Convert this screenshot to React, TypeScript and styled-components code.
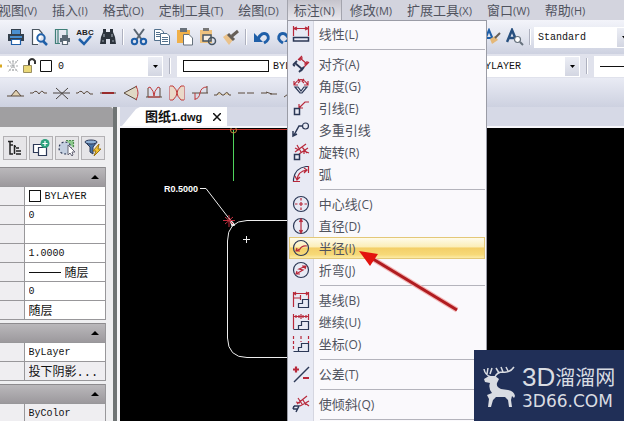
import React from "react";
import styled, { createGlobalStyle, css } from "styled-components";

const NAVY = "#2c3856";
const RED = "#b8283a";
const UI = '"Open Sans", "Noto Sans CJK SC", sans-serif';
const MONO = '"Liberation Mono", "Noto Sans CJK SC", monospace';

const Global = createGlobalStyle`
  * { box-sizing: border-box; }
  body { margin: 0; overflow: hidden; background: #000; }
  button, input, select { font: inherit; color: inherit; margin: 0; border: 0; padding: 0; border-radius: 0; }
`;

const Page = styled.div`
  position: relative;
  display: flex;
  flex-direction: column;
  height: 100vh;
  overflow: hidden;
  background: #cdd1e0;
  font-family: ${UI};
  font-size: 13px;
  color: #50535e;
`;

const MenuBar = styled.nav`
  display: flex;
  gap: 1px;
  height: 20px;
  margin-left: -9px;
  background: #d3d4de;
`;

const MenuSlot = styled.div`
  position: relative;
`;

const MenuButton = styled.button<{ $open?: boolean }>`
  height: 20px;
  padding: 0 7px;
  line-height: 20px;
  white-space: nowrap;
  background: none;
  ${(p) =>
    p.$open &&
    css`
      background: linear-gradient(#c5c4cc, #e9e8ee);
      box-shadow: inset 1px 0 #a3a4ad, inset -1px 0 #a3a4ad;
    `}
`;

const Key = styled.span<{ $large?: boolean }>`
  font-size: ${(p) => (p.$large ? 12 : 11)}px;
`;

const Dropdown = styled.div`
  position: absolute;
  z-index: 3;
  top: 20px;
  left: 0;
  width: 200px;
  padding: 2px 1px 8px;
  border: 1px solid #9a9ca6;
  background: linear-gradient(90deg, #e8eaf4 25px, #d5d6e0 25px, #d5d6e0 26px, #faf9fc 26px);
`;

const Command = styled.button<{ $active?: boolean }>`
  display: grid;
  grid-template-columns: 24px 1fr;
  column-gap: 6px;
  align-items: center;
  width: 100%;
  height: 22px;
  line-height: 20px;
  text-align: left;
  background: none;
  ${(p) =>
    p.$active &&
    css`
      background: linear-gradient(#fffdf0, #fbeeb8 45%, #f3cf68 50%, #f7d978 80%, #fdf0b4);
      box-shadow: inset 0 0 0 1px #e3c878;
    `}
`;

const CommandIcon = styled.span`
  display: grid;
  place-items: center;
`;

const Divider = styled.hr`
  height: 1px;
  margin: 4px 0 3px 31px;
  border: 0;
  background: #b4b4bc;
`;

const Toolbar = styled.div`
  display: flex;
  align-items: center;
  height: 34px;
  padding-left: 4px;
  background: linear-gradient(#f3f4fa, #e2e5ef 50%, #cdd1e0);
`;

const PropertyBar = styled.div`
  display: flex;
  align-items: center;
  height: 24px;
  background: #e0e2ec;
`;

const ShapeBar = styled.div`
  display: flex;
  align-items: center;
  height: 29px;
  padding-left: 4px;
  background: linear-gradient(#e9ebf4, #cdd1e0);
`;

const Tool = styled.button`
  display: grid;
  flex: none;
  place-items: center;
  width: 23px;
  height: 24px;
  background: none;
`;

const Grip = styled.span<{ $loose?: boolean }>`
  flex: none;
  width: 2px;
  height: 16px;
  margin: 0 ${(p) => (p.$loose ? 6 : 3)}px;
  background: linear-gradient(90deg, #aeb1bf 1px, #fff 1px);
`;

const Spacer = styled.span`
  flex: 1;
`;

const Combo = styled.label<{ $width: number; $bleed?: boolean }>`
  display: flex;
  flex: none;
  align-items: center;
  width: ${(p) => p.$width}px;
  height: 21px;
  margin-right: ${(p) => (p.$bleed ? -8 : 0)}px;
  background: #fff;
  color: #111;
  font-family: ${MONO};
  font-size: 10px;
`;

const ComboText = styled.select`
  flex: 1;
  min-width: 0;
  height: 21px;
  appearance: none;
  padding-left: 4px;
  background: none;
`;

const ComboArrow = styled.span`
  display: grid;
  flex: none;
  place-items: center;
  width: 14px;
  height: 19px;
  margin-right: 1px;
  background: linear-gradient(#eceef5, #d3d6e2);
`;

const Swatch = styled.span<{ $wide?: boolean }>`
  flex: none;
  width: ${(p) => (p.$wide ? 86 : 12)}px;
  height: 12px;
  margin-left: ${(p) => (p.$wide ? 6 : 0)}px;
  border: 1px solid #111;
  background: #fff;
`;

const Body = styled.main`
  display: grid;
  grid-template-columns: 120px 1fr;
  flex: 1;
  min-height: 0;
`;

const Sidebar = styled.aside`
  min-height: 0;
  overflow: hidden;
  border-right: 3px solid #f4f4f6;
  background: linear-gradient(270deg, #6f7474 4px, #efeff1 4px);
`;

const SideTitle = styled.div`
  height: 20px;
  margin-right: 4px;
  border-radius: 0 3px 0 0;
  background: #a09fa1;
`;

const SideTools = styled.div`
  display: flex;
  gap: 2px;
  padding: 9px 0 7px 3px;
`;

const SideTool = styled.button`
  display: grid;
  place-items: center;
  width: 24px;
  height: 24px;
  border: 1px solid #b3b1b4;
  background: #e6e5e8;
`;

const Section = styled.section`
  width: 106px;
  margin-bottom: 3px;
  border-right: 1px solid #98979a;
`;

const SectionHead = styled.button`
  display: flex;
  justify-content: flex-end;
  align-items: center;
  width: 100%;
  height: 19px;
  padding-right: 6px;
  border-top: 1px solid #8d8b8e;
  background: linear-gradient(#bab8bb, #9c999d);
`;

const Sheet = styled.table`
  width: 100%;
  border-collapse: collapse;
  table-layout: fixed;
  font-family: ${MONO};
  font-size: 12px;
  color: #111;
`;

const Name = styled.th`
  width: 24px;
  height: 19px;
  padding: 0;
  border-top: 1px solid #98979a;
  border-bottom: 1px solid #98979a;
  background: #efeef1;
`;

const Cell = styled.td<{ $muted?: boolean }>`
  height: 19px;
  padding: 0 0 0 4px;
  border: 1px solid #98979a;
  border-right: 0;
  background: ${(p) => (p.$muted ? "#efeef1" : "#fff")};
`;

const Value = styled.label`
  display: flex;
  align-items: center;
  gap: 4px;
  height: 18px;
`;

const Field = styled.input<{ $latin?: boolean }>`
  flex: 1;
  min-width: 0;
  height: 18px;
  background: none;
  font-size: ${(p) => (p.$latin ? 10 : 12)}px;
`;

const Stroke = styled.span`
  flex: none;
  width: 32px;
  height: 1px;
  background: #111;
`;

const Workspace = styled.div`
  display: flex;
  flex-direction: column;
  min-width: 0;
`;

const TabStrip = styled.div`
  display: flex;
  align-items: flex-end;
  height: 21px;
  border-bottom: 2px solid #f6f6fa;
  background: #d6d9e6;
`;

const Tab = styled.div`
  display: flex;
  align-items: center;
  gap: 9px;
  height: 19px;
  padding: 0 4px 0 25px;
  background: #fff;
  clip-path: polygon(2px 100%, 16px 2px, 20px 0, 100% 0, 100% 100%);
  color: #111;
  font-family: "Liberation Sans", "Noto Sans CJK SC", sans-serif;
  font-weight: bold;
  line-height: 18px;
`;

const FileName = styled.span`
  font-size: 11px;
`;

const TabClose = styled.button`
  display: grid;
  place-items: center;
  width: 12px;
  height: 14px;
  background: none;
`;

const Drawing = styled.svg`
  display: block;
  flex: 1;
  width: 100%;
  min-height: 0;
  background: #000;
`;

const Pointer = styled.svg`
  position: absolute;
  z-index: 4;
  left: 358px;
  top: 248px;
  pointer-events: none;
`;

const Brand = styled.div`
  position: absolute;
  z-index: 5;
  right: 0;
  bottom: 0;
  display: flex;
  align-items: center;
  gap: 5px;
  width: 150px;
  height: 71px;
  padding-left: 8px;
  background: #202f57;
  color: #d9dce2;
`;

const BrandName = styled.div`
  display: flex;
  align-items: center;
  font: 20px/30px "Noto Sans CJK SC", sans-serif;
  white-space: nowrap;
`;

const BrandLead = styled.span`
  font: 26px/30px "Liberation Sans", sans-serif;
`;

const BrandSite = styled.div`
  font: 17px/18px "DejaVu Sans", sans-serif;
`;

type IconProps = { w?: number; h?: number; c?: string; s?: number; children: React.ReactNode };
const Icon = ({ w = 18, h = 18, c = NAVY, s = 1.2, children }: IconProps) => (
  <svg width={w} height={h} viewBox={`0 0 ${w} ${h}`} fill="none" stroke={c} strokeWidth={s} aria-hidden="true">
    {children}
  </svg>
);

const Up = () => (
  <svg width="8" height="4" viewBox="0 0 8 4" aria-hidden="true"><path d="M0 4L4 0L8 4Z" fill="#000" /></svg>
);
const Down = () => (
  <svg width="5" height="3" viewBox="0 0 5 3" aria-hidden="true"><path d="M0 0H5L2.5 3Z" fill="#000" /></svg>
);

const icons = {
  linear: <><path stroke={RED} d="M1.500 1V11M16.500 1V11M2 3.500H16M5 2L2 3.500L5 5M13 2L16 3.500L13 5" /><path strokeWidth="1.500" d="M1.500 12.500H16.500V16H1.500Z" /></>,
  aligned: <><path stroke={RED} d="M6 5L10 1M12 12L17 7M8 3L15 9M8 6V3H11M15 6V9H12" /><path d="M1 10L5 6M7 17L12 12M3 8L10 14M1 10L3 11M9 16L12 12" strokeWidth="1.800" /></>,
  angular: <><path stroke={RED} d="M2 8Q9 -3 16 8M2 4V8H6M16 4V8H12M6 2L8 4L6 6M12 2L10 4L12 6" /><path d="M3 10L8 16H10L15 10H12L9 14L6 10Z" /></>,
  leader: <><path stroke={RED} d="M17 3H13L7 9M7 5V9H11" /><path strokeWidth="1.500" d="M2.500 9.500H7.500V15.500H2.500Z" /></>,
  multi: <><circle cx="13.500" cy="5" r="3" /><path strokeWidth="1.500" d="M10.500 5H7L2 14M1 10V15L5 13" /></>,
  rotated: <><path stroke={RED} d="M3 9L14 1M7 11L16 5M5 2L9 9M10 4L15 10M12 8L17 10M12 7V11M3 5L7 7" /><path strokeWidth="1.500" d="M2.500 11.500H7.500V16.500H2.500Z" /></>,
  arc: <><path d="M1.500 17V14Q3 3 14 1.500H16" /><path stroke={RED} d="M1 16.500H8M16.500 1V8M5 15Q6 6 15 5M3 11L5 15L8 12M12 3L15 5L12 8" /></>,
  center: <><circle cx="9" cy="9" r="7.500" /><path stroke={RED} d="M9 3V5.500M9 7V11M9 12.500V15M3 9H5.500M7 9H11M12.500 9H15" /></>,
  diameter: <><circle cx="9" cy="9" r="7.500" /><path stroke={RED} d="M9 2V16M7.500 5L9 2L10.500 5M7.500 13L9 16L10.500 13" /></>,
  radius: <><circle cx="9" cy="9" r="7.500" /><path stroke={RED} d="M15 7Q10 6 8 10L4 12M5 9L4 12H8" /></>,
  jogged: <><circle cx="9" cy="9" r="7.500" /><path stroke={RED} d="M14 5L7 8L11 9L4 13M5 10L4 13H8M10 5H14L13 8" /></>,
  baseline: <><path stroke={RED} d="M1.500 1V16M16.500 1V8M2 2.500H16M2 7H8M4 1L2 2.500L4 4M14 1L16 2.500L14 4M8.500 4V9" /><path d="M6.500 16.500V12.500H10.500V8.500H16.500V16.500Z" /></>,
  resume: <><path stroke={RED} d="M1.500 1V16M9 1V6M16.500 1V7M2 3.500H16M4 2V5M7 2V5M11 2V5M14 2V5" /><path d="M1.500 16.500H16.500V8.500H9.500V12.500H6.500V16.500" /></>,
  ordinate: <><path stroke={RED} strokeDasharray="3 2" d="M1.500 1V16M9 1V7M16.500 1V8" /><path d="M1.500 16.500H16.500V8.500H9.500V12.500H6.500V16.500" /></>,
  tolerance: <><path strokeWidth="1.500" d="M2 17L17 2" /><path stroke={RED} strokeWidth="2.200" d="M1 4.500H7M4 1.500V7.500M11 13H17" /></>,
  oblique: <><path stroke={RED} d="M5 9L15 1M8 11L17 6M6 3L10 9M11 5L14 10M13 8L17 11M4 7L8 8" /><path d="M2 11H7L4 17M2 11L1 14M1 14H5" strokeWidth="1.500" /></>,
};

type Entry = { icon: keyof typeof icons; name: string; key?: string; active?: boolean };
const commandGroups: Entry[][] = [
  [{ icon: "linear", name: "线性", key: "L" }],
  [
    { icon: "aligned", name: "对齐", key: "A" },
    { icon: "angular", name: "角度", key: "G" },
    { icon: "leader", name: "引线", key: "E" },
    { icon: "multi", name: "多重引线" },
    { icon: "rotated", name: "旋转", key: "R" },
    { icon: "arc", name: "弧" },
  ],
  [
    { icon: "center", name: "中心线", key: "C" },
    { icon: "diameter", name: "直径", key: "D" },
    { icon: "radius", name: "半径", key: "I", active: true },
    { icon: "jogged", name: "折弯", key: "J" },
  ],
  [
    { icon: "baseline", name: "基线", key: "B" },
    { icon: "resume", name: "继续", key: "U" },
    { icon: "ordinate", name: "坐标", key: "O" },
  ],
  [{ icon: "tolerance", name: "公差", key: "T" }],
  [{ icon: "oblique", name: "使倾斜", key: "Q" }],
];

const menus: [string, string][] = [
  ["视图", "V"], ["插入", "I"], ["格式", "O"], ["定制工具", "T"], ["绘图", "D"],
  ["标注", "N"], ["修改", "M"], ["扩展工具", "X"], ["窗口", "W"], ["帮助", "H"],
];

const BLUE = "#1f5fa8";
const fileTools: [string, React.ReactNode][] = [
  ["打印", <><path fill="#34404d" stroke="none" d="M4 1H14V6H4ZM1 6H17V13H1Z" /><path fill="#4a8fd0" stroke="none" d="M5 2H13V6H5ZM3 8H15V10H3Z" /><path fill="#fff" d="M4.500 11.500H13.500V16.500H4.500Z" stroke={BLUE} /></>],
  ["预览", <><path d="M12 7V5L9 1.500H2.500V16.500H8" stroke="#4a5560" fill="#fff" /><circle cx="11" cy="10" r="3.700" stroke={BLUE} strokeWidth="2" /><path d="M13 13L17 17" stroke={BLUE} strokeWidth="2.500" /></>],
  ["发布", <><path d="M14 7V1.500H2.500V15.500H7M5 2V15" stroke="#3f7f78" /><path d="M7 10H17V14H7ZM9 7H15V10H9Z" fill="#5a6874" stroke="none" /><path d="M9.500 12.500H14.500V16.500H9.500Z" fill="#fff" stroke="#5a6874" /></>],
];

const shapeTools: React.ReactNode[] = [
  <path key="a" d="M0 12H4L9 6L14 12H17M4 12H14" fill="#e0d0b0" />,
  <path key="a" d="M0 9H3Q6 5 9 10Q12 5 14 9H17" />,
  <path key="a" d="M0 9H17M3 4L15 15M15 4L3 15" stroke="#4a4542" />,
  <path key="a" d="M0 9H2Q5 5 8 10Q11 5 14 10H17" />,
  <><path d="M1 9H17" /><path d="M3 9H15" stroke="#992c2c" strokeWidth="2" /></>,
  <><path d="M15 2L2 9L15 16" fill="#e0d8c4" /><path d="M14 2Q18 9 14 16" stroke="#c03838" /></>,
  <><path d="M1 13H17M3 13V4M15 13V4" /><path d="M3 4L5 3Q9 7 9 12Q9 7 13 3L15 4M3 13H15" stroke="#c03838" /></>,
  <><path d="M2 2V16M16 2V16" stroke="#c03838" /><path d="M2 2H5Q9 6 9 9Q9 12 5 16H2M16 2H13Q9 6 9 9Q9 12 13 16H16" stroke="#c03838" fill="#ead9c8" /></>,
  <><path d="M1 9H17M16 2V9" /><path d="M4 16V9M4 15Q8 15 9 9T16 3" stroke="#c03838" /></>,
  <path key="a" d="M0 11H3Q5 6 8 11H10Q13 6 15 11H17" fill="#e0d0b0" />,
  <path key="a" d="M1 9H8M10 9H17" />,
  <path key="a" d="M1 9H7M10 10H17M6 8L12 10" />,
  <path key="a" d="M1 13L8 8" />,
];

const rows: { label: string; text: string; mark?: React.ReactNode; cjk?: boolean; muted?: boolean }[][] = [
  [
    { label: "颜色", text: "BYLAYER", mark: <Swatch /> },
    { label: "图层", text: "0" },
    { label: "线型", text: "" },
    { label: "线型比例", text: "1.0000" },
    { label: "线宽", text: "随层", mark: <Stroke />, cjk: true },
    { label: "厚度", text: "0" },
    { label: "打印样式", text: "随层", cjk: true },
  ],
  [
    { label: "材质", text: "ByLayer" },
    { label: "阴影显示", text: "投下阴影...", cjk: true, muted: true },
  ],
  [{ label: "打印颜色", text: "ByColor", muted: true }],
];

const DimensionMenu = () => (
  <Dropdown role="menu">
    {commandGroups.map((group, i) => (
      <React.Fragment key={i}>
        {group.map((e) => (
          <Command key={e.name} role="menuitem" $active={e.active}>
            <CommandIcon><Icon>{icons[e.icon]}</Icon></CommandIcon>
            <span>{e.name}{e.key && <Key $large>({e.key})</Key>}</span>
          </Command>
        ))}
        <Divider />
      </React.Fragment>
    ))}
  </Dropdown>
);

export default function App() {
  return (
    <Page>
      <Global />
      <MenuBar>
        {menus.map(([name, key]) => (
          <MenuSlot key={name}>
            <MenuButton $open={key === "N"}>{name}<Key>({key})</Key></MenuButton>
            {key === "N" && <DimensionMenu />}
          </MenuSlot>
        ))}
      </MenuBar>

      <Toolbar>
        {fileTools.map(([name, art]) => (
          <Tool key={name} aria-label={name}><Icon>{art}</Icon></Tool>
        ))}
        <Tool aria-label="拼写">
          <svg width="18" height="18" viewBox="0 0 18 18" aria-hidden="true">
            <text x="9" y="7" textAnchor="middle" fontFamily="Liberation Sans" fontSize="8" fontWeight="bold" fill="#222">ABC</text>
            <path d="M3 11L8 16L15 8" fill="none" stroke={BLUE} strokeWidth="2.500" />
          </svg>
        </Tool>
        <Tool aria-label="查找">
          <Icon><path fill="#2c333c" stroke="none" d="M4 1H7V4H11V1H14V4L16 9L17 16H11V11H7V16H1L2 9L4 4Z" /><path d="M3 13H5M13 13H15M5 6V9M13 6V9" stroke="#9aa4ae" /></Icon>
        </Tool>
        <Grip />
        <Tool aria-label="剪切">
          <Icon><path d="M4 1L12 12M14 1L6 12" stroke="#5a6672" strokeWidth="2" /><circle cx="4.500" cy="13.500" r="2.700" stroke={BLUE} strokeWidth="2" /><circle cx="13.500" cy="13.500" r="2.700" stroke={BLUE} strokeWidth="2" /></Icon>
        </Tool>
        <Tool aria-label="复制">
          <Icon s={1} c="#52708c"><path fill="#fff" d="M1.500 1.500H8L10.500 4V12.500H1.500Z" /><path fill="#fff" d="M7.500 5.500H14L16.500 8V16.500H7.500Z" /><path d="M3 4.500H7M3 6.500H7M3 8.500H7M9 9.500H15M9 11.500H15M9 13.500H15" /></Icon>
        </Tool>
        <Tool aria-label="粘贴">
          <Icon s={1}><path fill="#f0b048" stroke="none" d="M1 2H14V15H1Z" /><path fill="#69717a" stroke="none" d="M4 0H11V4H4Z" /><path fill="#fff" stroke="#66717c" d="M7.500 6.500H13L16.500 10V17H7.500Z" /></Icon>
        </Tool>
        <Tool aria-label="粘贴为块">
          <Icon s={1.5}><path fill="#eec27e" stroke="none" d="M1 2H13V15H1Z" /><path fill="#777" stroke="none" d="M4 0H10V3H4Z" /><path fill="#f5efe5" stroke="#465462" d="M4 7H12V13H4Z" /><circle cx="13" cy="13" r="3.500" stroke="#465462" /></Icon>
        </Tool>
        <Tool aria-label="特性匹配">
          <Icon><path fill="#eac28b" stroke="none" d="M1 9L5 6L11 12L7 17Z" /><path stroke="#665f58" strokeWidth="3" d="M6 6L12 12M10 8L16 3" /></Icon>
        </Tool>
        <Grip />
        <Tool aria-label="撤销">
          <Icon><path stroke={BLUE} strokeWidth="3" d="M11 15Q18 11 14 6.500Q9 3 5 11" /><path fill={BLUE} stroke="none" d="M1 5V14H10Z" /></Icon>
        </Tool>
        <Tool aria-label="重做">
          <Icon><path stroke={BLUE} strokeWidth="3" d="M7 15Q0 11 4 6.500Q9 3 13 11" /><path fill={BLUE} stroke="none" d="M17 5V14H8Z" /></Icon>
        </Tool>
        <Spacer />
        <Tool aria-label="文字样式">
          <Icon><path stroke={BLUE} strokeWidth="2" d="M1 14L6 2L11 14M3 10H9" /><path fill="#e5b878" stroke="none" d="M7 11L12 8L15 12L9 16Z" /><path stroke="#665f58" strokeWidth="2" d="M12 10L17 5" /></Icon>
        </Tool>
        <Tool aria-label="查找文字">
          <Icon><path stroke="#28507f" strokeWidth="2.500" d="M1 14L6 2L11 14M3 10H9" /><circle cx="11.500" cy="11.500" r="3" fill="#fff" stroke="#66717c" /><path stroke="#66717c" strokeWidth="2" d="M14 14L17 17" /></Icon>
        </Tool>
        <Grip />
        <Combo $width={98} $bleed>
          <ComboText aria-label="样式"><option>Standard</option></ComboText>
          <ComboArrow><Down /></ComboArrow>
        </Combo>
      </Toolbar>

      <PropertyBar>
        <Combo $width={163}>
          <Icon w={54} h={18} s={1}>
            <path d="M0 9H2" stroke="#d8a820" strokeWidth="3" />
            <path d="M8 3L18 15M18 3L8 15M7 9H19M13 3V15M9 5H17M9 13H17" stroke="#a9acae" strokeDasharray="2 1" />
            <path d="M23.500 8.500H31.500V15.500H23.500Z" fill="#ead878" stroke="#9a8f60" />
            <path d="M29 8V4Q32 0 35 4V7" strokeWidth="2" stroke="#333" />
            <path d="M40.500 3.500H51.500V14.500H40.500Z" fill="#fff" stroke="#111" />
          </Icon>
          <ComboText aria-label="图层"><option>0</option></ComboText>
          <ComboArrow><Down /></ComboArrow>
        </Combo>
        <Grip $loose />
        <Combo $width={200}>
          <Swatch $wide />
          <ComboText aria-label="颜色"><option>BYLAYER</option></ComboText>
          <ComboArrow><Down /></ComboArrow>
        </Combo>
        <Spacer />
        <Combo $width={105}>
          <ComboText aria-label="线型"><option>BYLAYER</option></ComboText>
          <ComboArrow><Down /></ComboArrow>
        </Combo>
        <Grip $loose />
        <Combo $width={38} $bleed>
          <ComboText aria-label="线宽"><option></option></ComboText>
          <Stroke />
        </Combo>
      </PropertyBar>

      <ShapeBar>
        {shapeTools.map((art, i) => (
          <Tool key={i} aria-label={`形状 ${i + 1}`}><Icon s={1} c="#5a4a3c">{art}</Icon></Tool>
        ))}
      </ShapeBar>

      <Body>
        <Sidebar>
          <SideTitle />
          <SideTools>
            <SideTool aria-label="分类"><Icon c="#222" s={1.5}><path d="M2 2.500H7M4 2V15H7M4 6H7M8.500 6V15M8 7.500H10M10 9H13M10 12H15M10 15H15" /></Icon></SideTool>
            <SideTool aria-label="添加"><Icon><path d="M1.500 5.500H11.500V13.500H1.500Z" fill="#fff" /><path d="M6.500 8.500H14.500V16.500H6.500Z" fill="#fff" /><circle cx="13" cy="4.500" r="4.500" fill="#2da27e" stroke="none" /><path d="M13 2V7M10.500 4.500H15.500" stroke="#fff" /></Icon></SideTool>
            <SideTool aria-label="选择"><Icon><path d="M8 1.500H15.500V9" fill="#8cc98c" strokeDasharray="2 1" stroke="#4d8b50" /><circle cx="7" cy="9" r="6" strokeDasharray="2 2" fill="#c3cfe0" /><path d="M10 6V16L12 14L14 17L15 16L14 13H17Z" fill="#fff" stroke="#667" strokeWidth="1" /></Icon></SideTool>
            <SideTool aria-label="快速选择"><Icon s={1}><path d="M1 3H13L9 8V15L6 13V8Z" fill="#4673a6" /><ellipse cx="7" cy="3" rx="6" ry="2" fill="#8fb1d6" /><path d="M15 5L9 12H12L10 17L17 10H14Z" fill="#f2c22e" stroke="#9a7414" /></Icon></SideTool>
          </SideTools>
          {rows.map((list, i) => (
            <Section key={i}>
              <SectionHead aria-label="折叠"><Up /></SectionHead>
              <Sheet>
                <tbody>
                  {list.map((r) => (
                    <tr key={r.label}>
                      <Name scope="row" aria-label={r.label} />
                      <Cell $muted={r.muted}>
                        <Value>{r.mark}<Field aria-label={r.label} $latin={!r.cjk} defaultValue={r.text} /></Value>
                      </Cell>
                    </tr>
                  ))}
                </tbody>
              </Sheet>
            </Section>
          ))}
        </Sidebar>

        <Workspace>
          <TabStrip>
            <Tab>
              <span>图纸<FileName>1.dwg</FileName></span>
              <TabClose aria-label="关闭"><Icon w={8} h={8} c="#111" s={1.5}><path d="M0 0L8 8M8 0L0 8" /></Icon></TabClose>
            </Tab>
          </TabStrip>
          <Drawing aria-label="图纸">
            <g fill="none" stroke="#eee">
              <path d="M63 1.500H170" stroke="#c03028" />
              <path d="M113.500 2V53" stroke="#4fd45c" />
              <circle cx="113.500" cy="2" r="3" stroke="#c88238" />
              <path d="M80 60.500H86L114 97" />
              <path d="M109 90L112 98L115 97Z" fill="#eee" />
              <path d="M200 92.500H127Q107.500 93 107.500 113V210Q108 229.500 127 229.500H200" />
              <path d="M103 92.500H115M109 87V99M105 89L113 96M113 89L105 96" stroke="#c02c3c" />
              <path d="M123 111.500H130M126.500 108V115" />
            </g>
            <text x="44" y="64" fontFamily="Liberation Sans" fontWeight="bold" fontSize="9" fill="#fff">R0.5000</text>
          </Drawing>
        </Workspace>
      </Body>

      <Pointer width="102" height="66" viewBox="0 0 102 66" aria-hidden="true">
        <path d="M15 11L99 62" stroke="#f3b6b6" strokeWidth="5" />
        <path d="M15 11L99 62" stroke="#b01c20" strokeWidth="3" />
        <path d="M1 3L20 6L12 18Z" fill="#e3140f" />
      </Pointer>

      <Brand>
        <svg width="35" height="44" viewBox="0 0 35 44" fill="#d9dce2" aria-hidden="true">
          <path d="M2 15L7 12L13 12L17 15L15 19Q14 23 19 25L26 26Q32 27 33 32L32 34L30 32L29 36L30 43H27L26 36L23 33L14 33L11 36L9 43H6L7 35L5 31L10 29Q6 24 8 19L3 18Z" />
          <path d="M9 13Q3 11 2 5M5 10L6 4M8 10L10 4M13 13Q15 8 21 8Q28 9 32 3M17 9L14 4M21 8L19 3M26 7L24 3" fill="none" stroke="#d9dce2" strokeWidth="1.500" />
        </svg>
        <div>
          <BrandName><BrandLead>3D</BrandLead>溜溜网</BrandName>
          <BrandSite>3D66.COM</BrandSite>
        </div>
      </Brand>
    </Page>
  );
}
